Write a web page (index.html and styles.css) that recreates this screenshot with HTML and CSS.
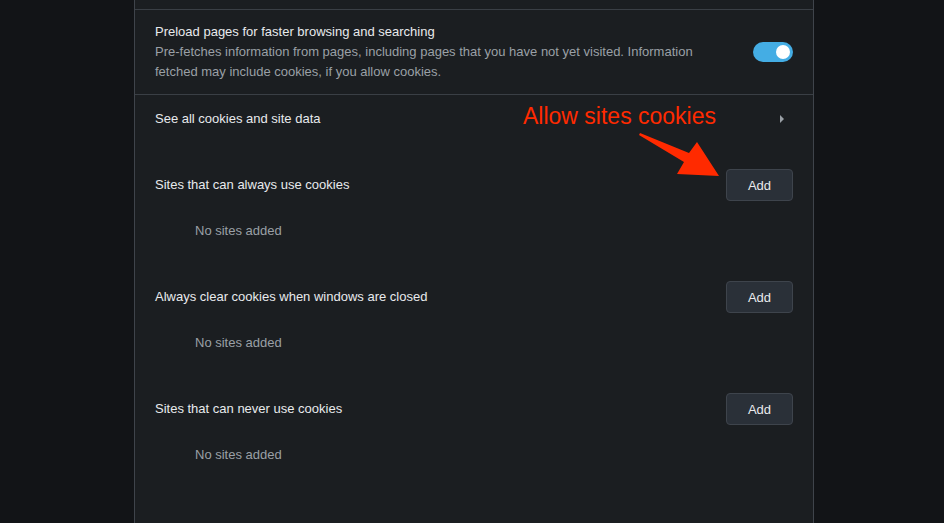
FILE: index.html
```html
<!DOCTYPE html>
<html>
<head>
<meta charset="utf-8">
<link rel="stylesheet" href="styles.css">
</head>
<body>
<div class="panel">
  <div class="top-gap"></div>
  <div class="row preload">
    <div class="text">
      <div class="title">Preload pages for faster browsing and searching</div>
      <div class="sub">Pre-fetches information from pages, including pages that you have not yet visited. Information fetched may include cookies, if you allow cookies.</div>
    </div>
    <div class="toggle"><span class="knob"></span></div>
  </div>
  <div class="row seeall">
    <div class="title">See all cookies and site data</div>
    <svg class="chev" width="6" height="10" viewBox="0 0 6 10"><path d="M1 1 L5 5 L1 9 Z" fill="#9aa0a6"/></svg>
  </div>
  <div class="section">
    <div class="sec-head"><div class="title">Sites that can always use cookies</div><button class="add">Add</button></div>
    <div class="empty">No sites added</div>
  </div>
  <div class="section">
    <div class="sec-head"><div class="title">Always clear cookies when windows are closed</div><button class="add">Add</button></div>
    <div class="empty">No sites added</div>
  </div>
  <div class="section">
    <div class="sec-head"><div class="title">Sites that can never use cookies</div><button class="add">Add</button></div>
    <div class="empty">No sites added</div>
  </div>
  <div class="note">Allow sites cookies</div>
  <svg class="arrow" width="944" height="523" viewBox="0 0 944 523"><polygon points="640,133 689,153 697,142 719,176 677,174 684,162 639,135" fill="#ff2a00"/></svg>
</div>
</body>
</html>
```
FILE: styles.css
```css
html, body {
  margin: 0;
  padding: 0;
  background: #121417;
  height: 523px;
  overflow: hidden;
  font-family: "Liberation Sans", Arial, sans-serif;
  font-size: 13px;
}
.panel {
  position: relative;
  margin-left: 134px;
  width: 678px;
  height: 523px;
  background: #1b1e21;
  border-left: 1px solid #3f444b;
  border-right: 1px solid #3f444b;
}
.top-gap {
  height: 9px;
  border-bottom: 1px solid #3a3f45;
}
.row {
  display: flex;
  align-items: center;
  justify-content: space-between;
  padding: 0 20px;
}
.preload {
  padding-top: 12px;
  padding-bottom: 12px;
  border-bottom: 1px solid #3a3f45;
}
.preload .text { width: 560px; }
.title {
  color: #e8eaed;
  line-height: 20px;
}
.sub {
  color: #9aa0a6;
  line-height: 20px;
}
.toggle {
  width: 40px;
  height: 20px;
  border-radius: 10px;
  background: #44ade4;
  display: flex;
  align-items: center;
  justify-content: flex-end;
  padding-right: 3px;
  box-sizing: border-box;
}
.knob {
  width: 14px;
  height: 14px;
  border-radius: 50%;
  background: #ffffff;
}
.seeall {
  height: 48px;
  padding-right: 28px;
}
.chev { display: block; }
.section {
  padding: 26px 20px 10px;
}
.sec-head {
  display: flex;
  align-items: center;
  justify-content: space-between;
  height: 32px;
}
.add {
  width: 67px;
  height: 32px;
  background: #2a3038;
  border: 1px solid #3e444c;
  border-radius: 4px;
  color: #e8eaed;
  font-family: "Liberation Sans", Arial, sans-serif;
  font-size: 13px;
  padding: 0;
}
.empty {
  margin-top: 16px;
  height: 28px;
  line-height: 28px;
  padding-left: 40px;
  color: #9aa0a6;
}
.note {
  position: absolute;
  left: 388px;
  top: 105px;
  font-size: 23px;
  line-height: 23px;
  color: #ff2a00;
  white-space: nowrap;
}
.arrow {
  position: absolute;
  left: -135px;
  top: 0;
  pointer-events: none;
}
```
